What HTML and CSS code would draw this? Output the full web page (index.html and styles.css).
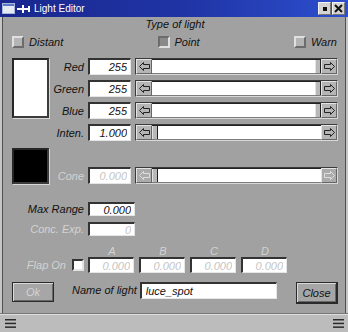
FILE: index.html
```html
<!DOCTYPE html>
<html lang="en">
<head>
    <meta charset="UTF-8">
    <title>Light Editor</title>
    <link rel="stylesheet" href="styles.css">
</head>
<body>
<div class="window">
    <div class="titlebar">
        <svg class="win-icon" width="13" height="11" viewBox="0 0 13 11">
            <rect x="0.5" y="0.5" width="12" height="10" fill="#e4e9f4" stroke="#a8b6dc"/>
            <rect x="1" y="1" width="11" height="2" fill="#5b79c9"/>
        </svg>
        <svg class="pin-icon" width="13" height="11" viewBox="0 0 13 11">
            <rect x="0" y="5" width="5" height="2" fill="#fff"/>
            <rect x="5" y="2" width="2" height="8" fill="#fff"/>
            <rect x="7" y="5" width="4" height="2" fill="#fff"/>
            <rect x="11" y="3" width="2" height="6" fill="#fff"/>
        </svg>
        <span class="title">Light Editor</span>
        <div class="title-buttons">
            <span class="tb-btn"><span class="tb-square"></span></span>
            <span class="tb-btn">
                <svg width="9" height="9" viewBox="0 0 9 9">
                    <path d="M1 1 L8 8 M8 1 L1 8" stroke="#111" stroke-width="2"/>
                </svg>
            </span>
        </div>
    </div>

    <div class="panel">
        <div class="type-title">Type of light</div>
        <div class="types">
            <div class="type"><span class="check"></span>Distant</div>
            <div class="type"><span class="check on"></span>Point</div>
            <div class="type"><span class="check"></span>Warn</div>
        </div>

        <div class="color-block">
            <div class="swatch"></div>
            <div class="rows">
                <div class="row">
                    <label>Red</label>
                    <input class="field" type="text" value="255" readonly>
                    <div class="slider">
                        <span class="arrow"><svg width="11" height="9" viewBox="0 0 11 9"><path d="M0.5 4.5 L4.5 0.5 L4.5 2.5 L10.5 2.5 L10.5 6.5 L4.5 6.5 L4.5 8.5 Z" fill="none" stroke="#222"/></svg></span>
                        <span class="track"><span class="fill"></span><span class="thumb"></span></span>
                        <span class="arrow"><svg width="11" height="9" viewBox="0 0 11 9"><path d="M10.5 4.5 L6.5 0.5 L6.5 2.5 L0.5 2.5 L0.5 6.5 L6.5 6.5 L6.5 8.5 Z" fill="none" stroke="#222"/></svg></span>
                    </div>
                </div>
                <div class="row">
                    <label>Green</label>
                    <input class="field" type="text" value="255" readonly>
                    <div class="slider">
                        <span class="arrow"><svg width="11" height="9" viewBox="0 0 11 9"><path d="M0.5 4.5 L4.5 0.5 L4.5 2.5 L10.5 2.5 L10.5 6.5 L4.5 6.5 L4.5 8.5 Z" fill="none" stroke="#222"/></svg></span>
                        <span class="track"><span class="fill"></span><span class="thumb"></span></span>
                        <span class="arrow"><svg width="11" height="9" viewBox="0 0 11 9"><path d="M10.5 4.5 L6.5 0.5 L6.5 2.5 L0.5 2.5 L0.5 6.5 L6.5 6.5 L6.5 8.5 Z" fill="none" stroke="#222"/></svg></span>
                    </div>
                </div>
                <div class="row">
                    <label>Blue</label>
                    <input class="field" type="text" value="255" readonly>
                    <div class="slider">
                        <span class="arrow"><svg width="11" height="9" viewBox="0 0 11 9"><path d="M0.5 4.5 L4.5 0.5 L4.5 2.5 L10.5 2.5 L10.5 6.5 L4.5 6.5 L4.5 8.5 Z" fill="none" stroke="#222"/></svg></span>
                        <span class="track"><span class="fill"></span><span class="thumb"></span></span>
                        <span class="arrow"><svg width="11" height="9" viewBox="0 0 11 9"><path d="M10.5 4.5 L6.5 0.5 L6.5 2.5 L0.5 2.5 L0.5 6.5 L6.5 6.5 L6.5 8.5 Z" fill="none" stroke="#222"/></svg></span>
                    </div>
                </div>
                <div class="row">
                    <label>Inten.</label>
                    <input class="field" type="text" value="1.000" readonly>
                    <div class="slider">
                        <span class="arrow"><svg width="11" height="9" viewBox="0 0 11 9"><path d="M0.5 4.5 L4.5 0.5 L4.5 2.5 L10.5 2.5 L10.5 6.5 L4.5 6.5 L4.5 8.5 Z" fill="none" stroke="#222"/></svg></span>
                        <span class="track"><span class="thumb"></span><span class="fill"></span></span>
                        <span class="arrow"><svg width="11" height="9" viewBox="0 0 11 9"><path d="M10.5 4.5 L6.5 0.5 L6.5 2.5 L0.5 2.5 L0.5 6.5 L6.5 6.5 L6.5 8.5 Z" fill="none" stroke="#222"/></svg></span>
                    </div>
                </div>
            </div>
        </div>

        <div class="cone-block">
            <div class="swatch dark"></div>
            <div class="rows">
                <div class="row off">
                    <label>Cone</label>
                    <input class="field" type="text" value="0.000" readonly>
                    <div class="slider">
                        <span class="arrow"><svg width="11" height="9" viewBox="0 0 11 9"><path d="M0.5 4.5 L4.5 0.5 L4.5 2.5 L10.5 2.5 L10.5 6.5 L4.5 6.5 L4.5 8.5 Z" fill="none" stroke="#dedede"/></svg></span>
                        <span class="track"><span class="thumb"></span><span class="fill"></span></span>
                        <span class="arrow"><svg width="11" height="9" viewBox="0 0 11 9"><path d="M10.5 4.5 L6.5 0.5 L6.5 2.5 L0.5 2.5 L0.5 6.5 L6.5 6.5 L6.5 8.5 Z" fill="none" stroke="#dedede"/></svg></span>
                    </div>
                </div>
            </div>
        </div>

        <div class="param first">
            <label>Max Range</label>
            <input class="field" type="text" value="0.000" readonly>
        </div>
        <div class="param off">
            <label>Conc. Exp.</label>
            <input class="field" type="text" value="0" readonly>
        </div>

        <div class="coef-head off">
            <span>A</span><span>B</span><span>C</span><span>D</span>
        </div>
        <div class="flap off">
            <label>Flap On</label>
            <span class="check box"></span>
            <div class="coefs">
                <input class="field" type="text" value="0.000" readonly>
                <input class="field" type="text" value="0.000" readonly>
                <input class="field" type="text" value="0.000" readonly>
                <input class="field" type="text" value="0.000" readonly>
            </div>
        </div>

        <div class="actions">
            <button type="button" class="btn off">Ok</button>
            <label class="name-label">Name of light</label>
            <input class="field name-field" type="text" value="luce_spot" readonly>
            <button type="button" class="btn close">Close</button>
        </div>
    </div>

    <div class="statusbar">
        <svg width="11" height="9" viewBox="0 0 11 9"><rect y="0" width="11" height="1.5" fill="#2a2a2a"/><rect y="3.7" width="11" height="1.5" fill="#2a2a2a"/><rect y="7.4" width="11" height="1.5" fill="#2a2a2a"/></svg>
        <svg width="11" height="9" viewBox="0 0 11 9"><rect y="0" width="11" height="1.5" fill="#2a2a2a"/><rect y="3.7" width="11" height="1.5" fill="#2a2a2a"/><rect y="7.4" width="11" height="1.5" fill="#2a2a2a"/></svg>
    </div>
</div>
</body>
</html>
```

FILE: styles.css
```css
* {
    box-sizing: border-box;
}

body {
    margin: 0;
    background-color: #a1a1a1;
    color: #111;
    font-family: "Liberation Sans", Arial, sans-serif;
    font-size: 11px;
    font-style: italic;
}

.window {
    width: 348px;
    height: 332px;
    display: flex;
    flex-direction: column;
    overflow: hidden;
}

/* title bar */
.titlebar {
    height: 17px;
    flex: none;
    display: flex;
    align-items: center;
    padding: 0 3px 0 2px;
    background: linear-gradient(90deg, #19278e 0%, #2035a6 55%, #2d4fcf 100%);
    color: #fff;
    font-style: normal;
    font-size: 10px;
}

.pin-icon {
    margin-left: 2px;
}

.title {
    margin-left: 4px;
}

.title-buttons {
    margin-left: auto;
    display: flex;
    gap: 1px;
}

.tb-btn {
    width: 13px;
    height: 13px;
    display: flex;
    align-items: center;
    justify-content: center;
    background-color: #d3d3d3;
    border: 1px solid;
    border-color: #f4f4f4 #777 #777 #f4f4f4;
}

.tb-square {
    width: 4px;
    height: 4px;
    background-color: #111;
}

/* main panel */
.panel {
    flex: 1;
    display: flex;
    flex-direction: column;
    padding: 0 10px 0 12px;
    box-shadow: inset 2px 0 0 #c6c6c6, inset 3px 0 0 #505050, inset -2px 0 0 #c6c6c6, inset -3px 0 0 #505050;
}

.off {
    color: #d3d3d3;
}

.type-title {
    text-align: center;
    line-height: 13px;
    margin-top: 1px;
}

.types {
    display: flex;
    justify-content: space-between;
    align-items: center;
    height: 13px;
    margin-top: 4px;
    padding-right: 1px;
}

.type {
    display: flex;
    align-items: center;
    gap: 5px;
}

.check {
    width: 12px;
    height: 12px;
    flex: none;
    background-color: #b4b4b4;
    border: 2px solid;
    border-color: #e0e0e0 #6c6c6c #6c6c6c #e0e0e0;
}

.check.on {
    background-color: #8a8a8a;
    border-color: #6c6c6c #e0e0e0 #e0e0e0 #6c6c6c;
}

.check.box {
    background-color: #fff;
    border-color: #333 #e4e4e4 #e4e4e4 #333;
}

/* colour rows */
.color-block {
    display: flex;
    margin-top: 10px;
}

.cone-block {
    display: flex;
    align-items: flex-end;
    margin-top: 7px;
}

.swatch {
    width: 37px;
    height: 60px;
    flex: none;
    background-color: #fff;
    border: 2px solid;
    border-color: #262626 #3c3c3c #3c3c3c #262626;
    box-shadow: 1px 1px 0 #d8d8d8;
}

.swatch.dark {
    height: 36px;
    background-color: #000;
}

.rows {
    flex: 1;
    display: flex;
    flex-direction: column;
    gap: 5px;
}

.row {
    display: flex;
    align-items: center;
    height: 17px;
}

.row label {
    width: 35px;
    text-align: right;
}

.field {
    width: 43px;
    height: 17px;
    margin: 0 0 0 4px;
    padding: 0 3px 0 0;
    background-color: #fff;
    border: solid;
    border-width: 2px 1px 1px 2px;
    border-color: #333 #e6e6e6 #e6e6e6 #333;
    border-radius: 0;
    color: #111;
    font: italic 11px "Liberation Sans", Arial, sans-serif;
    text-align: right;
    outline: none;
}

.off .field {
    color: #c4c4c4;
}

.slider {
    flex: 1;
    display: flex;
    height: 17px;
    margin-left: 4px;
    border: 1px solid;
    border-color: #3a3a3a #d8d8d8 #d8d8d8 #3a3a3a;
}

.arrow {
    width: 16px;
    flex: none;
    display: flex;
    align-items: center;
    justify-content: center;
    background-color: #b5b5b5;
    border: 1px solid;
    border-color: #e4e4e4 #666 #666 #e4e4e4;
}

.off .arrow {
    background-color: #ababab;
}

.track {
    flex: 1;
    display: flex;
    background-color: #fff;
    border-top: 1px solid #222;
    border-bottom: 1px solid #7c7c7c;
}

.track .fill {
    flex: 1;
}

.thumb {
    width: 6px;
    background-color: #b8b8b8;
    border-left: 1px solid #e2e2e2;
    border-right: 1px solid #222;
}

/* single value rows */
.param {
    display: flex;
    align-items: center;
    height: 14px;
    margin-top: 6px;
}

.param.first {
    margin-top: 18px;
}

.param label {
    width: 72px;
    text-align: right;
}

.param .field {
    width: 47px;
    height: 14px;
}

.coef-head {
    display: flex;
    gap: 5px;
    padding-left: 77px;
    margin-top: 10px;
    height: 10px;
    line-height: 10px;
}

.coef-head span {
    width: 46px;
    text-align: center;
}

.flap {
    display: flex;
    align-items: center;
    height: 16px;
    margin-top: 1px;
}

.flap label {
    width: 54px;
    text-align: right;
}

.flap .check {
    margin-left: 6px;
}

.coefs {
    display: flex;
    gap: 5px;
    margin-left: 4px;
}

.coefs .field {
    width: 46px;
    height: 16px;
    margin-left: 0;
}

/* bottom buttons */
.actions {
    display: flex;
    align-items: flex-start;
    margin-top: 9px;
}

.btn {
    width: 42px;
    height: 20px;
    padding: 0;
    background-color: #a6a6a6;
    border: 1px solid #2a2a2a;
    box-shadow: inset 1px 1px 0 #dadada, inset -1px -1px 0 #686868;
    color: #111;
    font: italic 11px "Liberation Sans", Arial, sans-serif;
}

.btn.off {
    color: #d3d3d3;
}

.btn.close {
    height: 22px;
    margin-left: auto;
    border-width: 1px 2px 2px 1px;
}

.name-label {
    margin-left: 18px;
    line-height: 17px;
}

.name-field {
    width: 137px;
    margin-left: 3px;
    padding: 0 0 0 4px;
    text-align: left;
}

/* status bar */
.statusbar {
    height: 19px;
    flex: none;
    display: flex;
    justify-content: space-between;
    align-items: center;
    padding: 0 4px 0 5px;
    background-color: #bcbcbc;
    border-top: 1px solid #777;
    box-shadow: inset 0 1px 0 #dedede;
}
```
